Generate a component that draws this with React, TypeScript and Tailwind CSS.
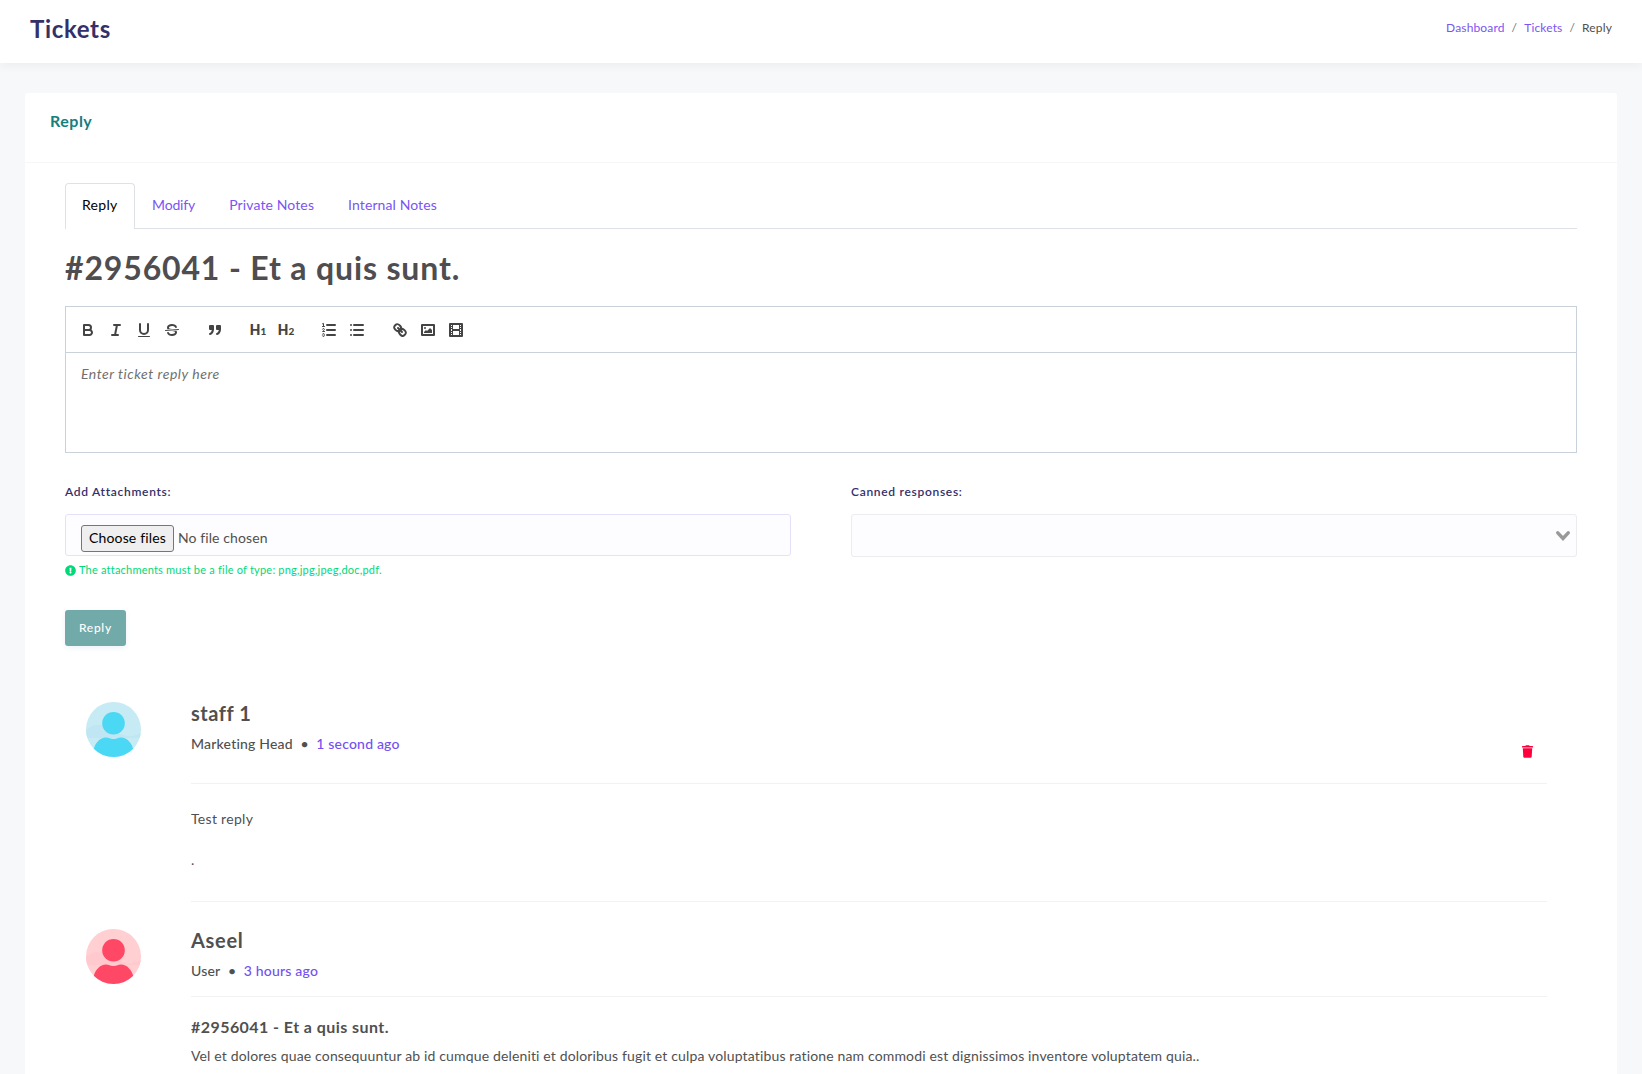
import React from "react";
import { FaExclamationCircle, FaTrash } from "react-icons/fa";

const S = { fill: "none", stroke: "#444", strokeWidth: 2, strokeLinecap: "round", strokeLinejoin: "round" } as const;
const N = { ...S, strokeWidth: 1 } as const;
const F = { fill: "#444" } as const;

function Tool({ children }: { children: React.ReactNode }) {
  return (
    <button className="flex h-6 w-7 items-center justify-center">
      <svg viewBox="0 0 18 18" className="size-[18px]">{children}</svg>
    </button>
  );
}

function Heading({ level }: { level: string }) {
  return (
    <button className="flex h-6 w-7 items-baseline justify-center font-[Roboto] text-[15px] leading-6 font-bold text-[#444]">
      H<span className="font-[Lato] text-[10px] font-black">{level}</span>
    </button>
  );
}

function Toolbar() {
  return (
    <div className="flex h-[46px] items-center gap-[15px] border-b border-[#c9d2da] px-2">
      <div className="flex">
        <Tool>
          <path {...S} d="M5,4H9.5A2.5,2.5,0,0,1,12,6.5v0A2.5,2.5,0,0,1,9.5,9H5V4Z" />
          <path {...S} d="M5,9h5.5A2.5,2.5,0,0,1,13,11.5v0A2.5,2.5,0,0,1,10.5,14H5V9Z" />
        </Tool>
        <Tool>
          <line {...S} x1="7" x2="13" y1="4" y2="4" />
          <line {...S} x1="5" x2="11" y1="14" y2="14" />
          <line {...S} x1="8" x2="10" y1="14" y2="4" />
        </Tool>
        <Tool>
          <path {...S} d="M5,3V9a4.012,4.012,0,0,0,4,4H9a4.012,4.012,0,0,0,4-4V3" />
          <rect {...F} height="1" width="12" x="3" y="15" rx="0.5" />
        </Tool>
        <Tool>
          <line {...N} x1="15.5" x2="2.5" y1="8.5" y2="9.5" />
          <path {...F} d="M9.007,8C6.542,7.791,6,7.519,6,6.5,6,5.792,7.283,5,9,5c1.571,0,2.765.679,2.969,1.309a1,1,0,0,0,1.9-.617C13.356,4.106,11.354,3,9,3,6.2,3,4,4.538,4,6.5a3.2,3.2,0,0,0,.5,1.843Z" />
          <path {...F} d="M8.984,10C11.457,10.208,12,10.479,12,11.5c0,0.708-1.283,1.5-3,1.5-1.571,0-2.765-.679-2.969-1.309a1,1,0,1,0-1.9.617C4.644,13.894,6.646,15,9,15c2.8,0,5-1.538,5-3.5a3.2,3.2,0,0,0-.5-1.843Z" />
        </Tool>
      </div>
      <div className="flex">
        <Tool>
          <rect {...S} fill="#444" height="3" width="3" x="4" y="5" />
          <rect {...S} fill="#444" height="3" width="3" x="11" y="5" />
          <path {...S} fill="#444" d="M7,8c0,4.031-3,5-3,5" />
          <path {...S} fill="#444" d="M14,8c0,4.031-3,5-3,5" />
        </Tool>
      </div>
      <div className="flex">
        <Heading level="1" />
        <Heading level="2" />
      </div>
      <div className="flex">
        <Tool>
          <line {...S} x1="7" x2="15" y1="4" y2="4" />
          <line {...S} x1="7" x2="15" y1="9" y2="9" />
          <line {...S} x1="7" x2="15" y1="14" y2="14" />
          <line {...N} x1="2.5" x2="4.5" y1="5.5" y2="5.5" />
          <path {...N} d="M2.5,2.8L3.5,2.4V5.5" />
          <path {...N} d="M4.5,10.5h-2c0-.234,1.85-1.076,1.85-2.234A0.959,0.959,0,0,0,2.5,8.156" />
          <path {...N} d="M2.5,14.846a0.959,0.959,0,0,0,1.85-.109A0.7,0.7,0,0,0,3.75,14a0.688,0.688,0,0,0,.6-0.736,0.959,0.959,0,0,0-1.85-.109" />
        </Tool>
        <Tool>
          <line {...S} x1="6" x2="15" y1="4" y2="4" />
          <line {...S} x1="6" x2="15" y1="9" y2="9" />
          <line {...S} x1="6" x2="15" y1="14" y2="14" />
          <line {...S} x1="3" x2="3" y1="4" y2="4" />
          <line {...S} x1="3" x2="3" y1="9" y2="9" />
          <line {...S} x1="3" x2="3" y1="14" y2="14" />
        </Tool>
      </div>
      <div className="flex">
        <Tool>
          <line {...S} x1="7" x2="11" y1="7" y2="11" />
          <path {...S} d="M8.9,4.577a3.476,3.476,0,0,1,.36,4.679A3.476,3.476,0,0,1,4.577,8.9C3.185,7.5,2.035,6.4,4.217,4.217S7.5,3.185,8.9,4.577Z" />
          <path {...S} d="M13.423,9.1a3.476,3.476,0,0,0-4.679-.36,3.476,3.476,0,0,0,.36,4.679c1.392,1.392,2.5,2.542,4.679.36S14.815,10.5,13.423,9.1Z" />
        </Tool>
        <Tool>
          <rect {...S} height="10" width="12" x="3" y="4" />
          <circle {...F} cx="6" cy="7" r="1" />
          <polyline {...F} points="5 12 5 11 7 9 8 10 11 7 13 9 13 12 5 12" />
        </Tool>
        <Tool>
          <rect {...S} height="12" width="12" x="3" y="3" />
          <rect {...F} height="12" width="1" x="5" y="3" />
          <rect {...F} height="12" width="1" x="12" y="3" />
          <rect {...F} height="2" width="8" x="5" y="8" />
          {[5, 7, 10, 12].map((y) => (
            <g key={y}>
              <rect {...F} height="1" width="3" x="3" y={y} />
              <rect {...F} height="1" width="3" x="12" y={y} />
            </g>
          ))}
        </Tool>
      </div>
    </div>
  );
}

function Avatar({ light, shade, solid }: { light: string; shade: string; solid: string }) {
  return (
    <svg viewBox="0 0 55 55" className="mr-[50px] size-[55px] shrink-0 overflow-hidden rounded-full">
      <rect width="55" height="55" fill={light} />
      <path d="M0 28C8 21 18 21 27 28S47 36 55 31V36H0Z" fill={shade} />
      <circle cx="27.5" cy="21.3" r="11.3" fill={solid} />
      <path d="M7.5 48C9 41 14 35.5 20 35.5C23 35.5 24 37 27.5 37S32 35.5 35 35.5C41 35.5 46 41 47.5 48V55H7.5Z" fill={solid} />
    </svg>
  );
}

export default function App() {
  return (
    <div className="h-[1074px] overflow-hidden bg-[#f7f8fa] font-[Lato,sans-serif] text-[#505050]">
      <header className="flex h-[63px] justify-between bg-white px-[30px] shadow-[0_4px_8px_rgba(0,0,0,0.04)]">
        <h1 className="pt-[13px] text-2xl leading-8 font-bold tracking-[0.65px] text-[#34306a]">Tickets</h1>
        <nav className="flex gap-[7px] pt-[19px] text-xs leading-[18px] tracking-[0.15px]">
          <span className="text-[#7a55f2]">Dashboard</span>
          <span className="text-[#6c757d]">/</span>
          <span className="text-[#7a55f2]">Tickets</span>
          <span className="text-[#6c757d]">/</span>
          <span>Reply</span>
        </nav>
      </header>
      <main className="mx-[25px] mt-[30px] h-[1000px] rounded-[3px] bg-white">
        <div className="h-[70px] border-b border-[#f7f7f9] px-[25px] pt-[16px]">
          <h4 className="text-base leading-6 font-bold tracking-[0.5px] text-[#138080]">Reply</h4>
        </div>
        <div className="px-10 pt-5">
          <div className="flex border-b border-[#dee2e6] text-sm leading-6 text-[#7a55f2]">
            <div className="-mb-px h-[46px] w-[70px] rounded-t border border-b-0 border-[#dee2e6] bg-white px-4 pt-[9px] tracking-[0.3px] text-black">Reply</div>
            <div className="px-[17px] pt-[10px] tracking-[-0.15px]">Modify</div>
            <div className="px-[17px] pt-[10px] tracking-[0.12px]">Private Notes</div>
            <div className="px-[17px] pt-[10px] tracking-[0.1px]">Internal Notes</div>
          </div>
          <h2 className="mt-[19px] text-[32px] leading-10 font-bold tracking-[0.85px] text-[#4f4d4f]">#2956041 - Et a quis sunt.</h2>
          <div className="mt-[18px] h-[147px] border border-[#c9d2da]">
            <Toolbar />
            <p className="px-[15px] pt-[9px] text-sm leading-6 tracking-[0.54px] text-[#707070] italic">Enter ticket reply here</p>
          </div>
          <div className="mt-[30px] grid grid-cols-2 gap-[60px]">
            <div>
              <label className="block text-xs leading-[18px] font-semibold tracking-[0.7px] text-[#34306a]">Add Attachments:</label>
              <div className="mt-[13px] flex h-[42px] items-start rounded-[3px] border border-[#e4e1fb] bg-[#fdfdff] px-[15px] pt-[10px] text-sm">
                <span className="h-[27px] rounded-[3px] border border-[#767676] bg-[#efefef] px-[7px] leading-6 tracking-[0.15px] text-black">Choose files</span>
                <span className="ml-1 leading-[26px] tracking-[0.1px]">No file chosen</span>
              </div>
              <p className="mt-[6px] flex items-center text-[11px] leading-4 tracking-[0.21px] text-[#00d977]"><FaExclamationCircle className="mr-[3px] size-[11px]" />The attachments must be a file of type: png,jpg,jpeg,doc,pdf.</p>
              <button className="mt-[32px] h-9 rounded-[3px] bg-[#72a9a9] px-[14px] text-xs font-medium tracking-[0.7px] text-white shadow-[0_2px_6px_#eef2f8]">Reply</button>
            </div>
            <div>
              <label className="block text-xs leading-[18px] font-semibold tracking-[0.7px] text-[#34306a]">Canned responses:</label>
              <div className="mt-[13px] flex h-[43px] items-center justify-end rounded-[3px] border border-[#ebebf0] bg-[#fdfdff] pr-[6px]">
                <svg viewBox="0 0 14 10" className="h-[10px] w-[14px]"><path d="M1.8 1.8L7 7.5L12.2 1.8" fill="none" stroke="#999" strokeWidth="3.4" strokeLinecap="round" /></svg>
              </div>
            </div>
          </div>
          <article className="mt-[56px] flex px-[21px]">
            <Avatar light="#c6ebf4" shade="#bfe6f2" solid="#4ad8f4" />
            <div className="w-[1356px]">
              <div className="-mt-0.5 flex h-[84px] justify-between border-b border-[#f2f2f2]">
                <div>
                  <h4 className="mt-px text-xl leading-6 font-bold tracking-[0.55px]">staff 1</h4>
                  <p className="mt-[9px] flex text-sm font-medium tracking-[0.2px]"><span>Marketing Head</span><span className="mx-[7.5px]">•</span><span className="text-[#7350f2]">1 second ago</span></p>
                </div>
                <FaTrash className="mt-[45px] mr-[14px] h-[13px] w-[11px] text-[#ff003d]" />
              </div>
              <div className="h-[118px] border-b border-[#f2f2f2] pt-[25px] text-sm">
                <p className="tracking-[0.3px]">Test reply</p>
                <p className="mt-[21px]">.</p>
              </div>
            </div>
          </article>
          <article className="mt-[27px] flex px-[21px]">
            <Avatar light="#ffcfd2" shade="#ffc9cd" solid="#ff4865" />
            <div className="w-[1356px]">
              <div className="-mt-0.5 h-[70px] border-b border-[#f2f2f2]">
                <h4 className="pt-px text-xl leading-6 font-bold tracking-[0.7px]">Aseel</h4>
                <p className="mt-[9px] flex text-sm font-medium tracking-[0.2px]"><span>User</span><span className="mx-[7.5px]">•</span><span className="text-[#7350f2]">3 hours ago</span></p>
              </div>
              <h5 className="mt-[18px] text-base leading-6 font-bold tracking-[0.44px]">#2956041 - Et a quis sunt.</h5>
              <p className="mt-[7px] text-sm tracking-[0.15px] whitespace-nowrap">Vel et dolores quae consequuntur ab id cumque deleniti et doloribus fugit et culpa voluptatibus ratione nam commodi est dignissimos inventore voluptatem quia..</p>
            </div>
          </article>
        </div>
      </main>
    </div>
  );
}
